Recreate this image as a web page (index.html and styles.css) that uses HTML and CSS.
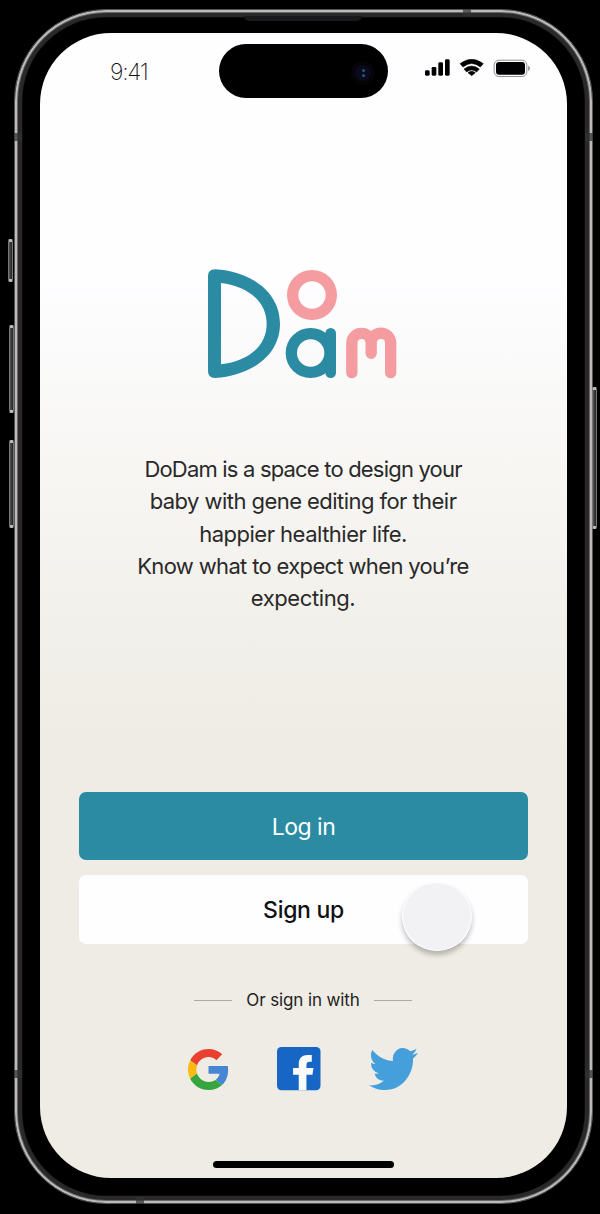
FILE: index.html
```html
<!DOCTYPE html>
<html lang="en">
<head>
<meta charset="utf-8">
<title>DoDam</title>
<link rel="stylesheet" href="styles.css">
</head>
<body>
<div class="phone">
  <i class="key key-action"></i><i class="key key-up"></i><i class="key key-down"></i><i class="key key-power"></i>
  <i class="band band-tl"></i><i class="band band-tr"></i><i class="band band-bl"></i><i class="band band-br"></i><i class="band-h band-top"></i><i class="band-h band-bottom"></i>
  <i class="earpiece"></i>
  <main class="screen">
    <header class="status">
      <span class="time">9:41</span>
      <div class="island"><span class="lens"><i></i><i></i></span></div>
      <svg class="indicators" viewBox="0 0 318 54">
        <rect x="0" y="34" width="14" height="16" rx="4"/><rect x="20" y="24" width="14" height="26" rx="4"/><rect x="40" y="10" width="14" height="40" rx="4"/><rect x="60" y="1" width="14" height="49" rx="4"/>
        <path d="M105 14Q140-13 175 14L166 24Q140 3 114 24ZM117 30Q140 12 163 30L155 39Q140 27 125 39ZM129 41Q140 33 151 41L140 50Z" stroke="#000" stroke-width="1.500" stroke-linejoin="round"/>
        <rect x="207.500" y="3.500" width="98" height="49" rx="14" fill="none" stroke="#8f8f8f" stroke-width="3"/><rect x="213" y="9" width="87" height="38" rx="9"/><path d="M309 20Q315 22 315 28T309 36Z" fill="#999"/>
      </svg>
    </header>
    <svg class="logo" viewBox="51 42 570 330" role="img" aria-label="DoDam">
      <path fill="#2a8ba3" fill-rule="evenodd" d="M54 63Q54 43 75 43C190 50 270 116 270 206C270 304 180 362 75 369Q54 369 54 349ZM93 84V328C172 318 230 276 230 206C230 140 174 94 93 84Z"/>
      <g fill="none" stroke-width="34" stroke-linecap="round">
        <circle cx="366" cy="120" r="58" stroke="#f59ca1"/>
        <path stroke="#f59ca1" d="M485.500 353V264A29 29 0 0 1 543.500 264V295M543.500 264A29 29 0 0 1 602 264V353"/>
        <circle cx="362" cy="294" r="58" stroke="#2a8ba3"/><path stroke="#2a8ba3" stroke-width="32" d="M422 235V353"/>
      </g>
    </svg>
    <p class="intro"><span class="l1">DoDam is a space to design your</span><span class="l2">baby with gene editing for their</span><span class="l3">happier healthier life.</span><span class="l4">Know what to expect when you’re</span><span class="l5">expecting.</span></p>
    <div class="actions">
      <button class="btn login"><span>Log in</span></button>
      <button class="btn signup"><span>Sign up</span><i class="touch"></i></button>
    </div>
    <div class="divider"><i></i><span>Or sign in with</span><i></i></div>
    <div class="social">
      <svg class="google" viewBox="0 0 48 48"><path fill="#ea4030" d="M24 9.500c3.540 0 6.710 1.220 9.210 3.600l6.850-6.850C35.900 2.380 30.470 0 24 0 14.620 0 6.510 5.380 2.560 13.220l7.980 6.190C12.430 13.720 17.740 9.500 24 9.500z"/><path fill="#4686d3" d="M46.980 24.550c0-1.570-.15-3.090-.38-4.550H24v9.020h12.940c-.58 2.960-2.260 5.480-4.780 7.180l7.730 6c4.510-4.180 7.090-10.360 7.090-17.650z"/><path fill="#fbb914" d="M10.530 28.590c-.48-1.450-.76-2.990-.76-4.590s.27-3.140.76-4.590l-7.980-6.190C.92 16.460 0 20.120 0 24c0 3.880.92 7.540 2.560 10.780l7.970-6.190z"/><path fill="#35a63f" d="M24 48c6.480 0 11.930-2.130 15.890-5.810l-7.730-6c-2.150 1.450-4.920 2.300-8.160 2.300-6.260 0-11.570-4.220-13.470-9.910l-7.980 6.190C6.510 42.620 14.620 48 24 48z"/></svg>
      <svg class="facebook" viewBox="321 201 130 130"><rect x="321" y="201" width="130" height="129" rx="13" fill="#1766c5"/><path fill="#fafafa" d="M386 330V284H369V264H386V252C386 234 397 225 412 225H425V245H418Q409 245 409 254V264H430L427 284H409V330Z"/></svg>
      <svg class="twitter" viewBox="0 2.250 24 19.500" preserveAspectRatio="none"><path fill="#449fdb" d="M23.953 4.570a10 10 0 01-2.825.775 4.958 4.958 0 002.163-2.723c-.951.555-2.005.959-3.127 1.184a4.920 4.920 0 00-8.384 4.482C7.690 8.095 4.067 6.130 1.640 3.162a4.822 4.822 0 00-.666 2.475c0 1.710.87 3.213 2.188 4.096a4.904 4.904 0 01-2.228-.616v.06a4.923 4.923 0 003.946 4.827 4.996 4.996 0 01-2.212.085 4.936 4.936 0 004.604 3.417 9.867 9.867 0 01-6.102 2.105c-.390 0-.779-.023-1.170-.067a13.995 13.995 0 007.557 2.209c9.053 0 13.998-7.496 13.998-13.985 0-.210 0-.420-.015-.630A9.935 9.935 0 0024 4.590z"/></svg>
    </div>
    <div class="home"></div>
  </main>
</div>
</body>
</html>
```
FILE: styles.css
```css
* { box-sizing: border-box; }
body { margin: 0; height: 1214px; background: #000; font-family: Inter, sans-serif; overflow: hidden; }
i { display: block; }
.phone { position: relative; display: inline-block; width: 579px; height: 1195px; margin: 9px 0 0 14px; padding: 23px 25px 25px; border: 1px solid #555; border-radius: 92px; background: #000; box-shadow: inset 0 0 0 2px #bbb, inset 0 0 0 3px #686868, inset 0 0 0 7px #2a2829, inset 0 0 1px 7.500px #151515; }
.screen { width: 527px; height: 1145px; border-radius: 71px; overflow: hidden; background: linear-gradient(#fefdff 0, #fefdff 250px, #fbfbfb 310px, #f7f6f3 440px, #f3f1ec 570px, #eeece4 710px, #eeece4); display: flex; flex-direction: column; align-items: center; }
.status { width: 100%; height: 64px; display: grid; grid-template-columns: 179px 169px 1fr; flex: none; align-items: start; }
.time { margin: 24.500px 0 0 70px; font-size: 23px; line-height: 29px; font-weight: 200; color: #111; letter-spacing: -1.200px; }
.island { margin-top: 11px; height: 53.500px; border-radius: 27px; background: #000; display: flex; align-items: center; justify-content: flex-end; padding: 4px 17px 0 0; }
.lens { width: 16px; height: 16px; border-radius: 50%; background: #0a0a1d; box-shadow: 0 0 0 4px #060407; display: flex; flex-direction: column; align-items: center; justify-content: center; gap: 2px; }
.lens i { width: 3px; height: 3px; border-radius: 50%; background: #245577; }
.indicators { width: 106px; height: 18px; margin: 26px 0 0 37px; }
.logo { width: 190px; height: 110px; flex: none; margin: 172px 0 0 -3px; }
.intro { margin: 74px 0 0 -1px; width: 400px; font-size: 22px; line-height: 32.250px; color: #292929; display: flex; flex-direction: column; align-items: center; flex: none; white-space: nowrap; }
.l1 { letter-spacing: -.81px; }
.l2 { letter-spacing: -.55px; }
.l3 { letter-spacing: -.5px; }
.l4 { letter-spacing: -.66px; }
.l5 { letter-spacing: -.4px; }
.actions { margin-top: 177.250px; width: 449px; display: flex; flex-direction: column; gap: 15px; flex: none; }
.btn { position: relative; height: 68.500px; padding: 1px 0 0; border: 0; border-radius: 7px; font: 500 23px/68px Inter, sans-serif; letter-spacing: -.3px; }
.login { background: #2a8ba3; color: #fff; font-weight: 400; letter-spacing: -.5px; }
.signup { background: #fefdff; color: #111; }
.touch { position: absolute; left: 323px; top: 7px; width: 70px; height: 69px; border: 1.500px solid #fff; border-radius: 50%; background: #f2f1f3; box-shadow: 0 4px 5px rgba(0,0,0,.25); }
.divider { width: 218px; margin: 44.500px 0 0 -1px; height: 24px; display: flex; align-items: center; justify-content: space-between; flex: none; font-size: 17px; letter-spacing: -.12px; color: #222; white-space: nowrap; }
.divider i { width: 38px; height: 1px; background: #aaa9a5; }
.social { display: flex; width: 230px; margin: 35px 0 0 -1px; justify-content: space-between; flex: none; align-items: center; }
.google { width: 41px; height: 41px; margin-top: 1px; }
.facebook { width: 43.500px; height: 43.500px; }
.twitter { width: 49px; height: 42px; }
.home { width: 181px; height: 7px; border-radius: 4px; background: #000; margin: auto 0 10px; }
.key { position: absolute; border: 1px solid #777; background: linear-gradient(90deg, #555, #222); border-radius: 2px; width: 5px; border-top: 3px solid #bbb; border-bottom: 3px solid #bbb; }
.key-action { left: -7px; top: 229px; height: 43px; }
.key-up { left: -6px; top: 315px; height: 88px; }
.key-down { left: -6px; top: 430px; height: 88px; }
.key-power { right: -5px; top: 377px; height: 142px; }
.band { position: absolute; width: 8px; height: 8px; background: rgba(50,50,50,.75); }
.band-tl, .band-bl { left: -1px; }
.band-tr, .band-br { right: -1px; }
.band-tl, .band-tr { top: 123px; }
.band-bl, .band-br { bottom: 125px; }
.band-h { position: absolute; width: 8px; height: 7px; background: rgba(50,50,50,.7); }
.band-top { left: 448px; top: -1px; }
.band-bottom { left: 121px; bottom: -1px; }
.earpiece { position: absolute; left: 229px; top: 6px; width: 118px; height: 5px; background: #19181a; border-radius: 0 0 6px 6px; }
```
